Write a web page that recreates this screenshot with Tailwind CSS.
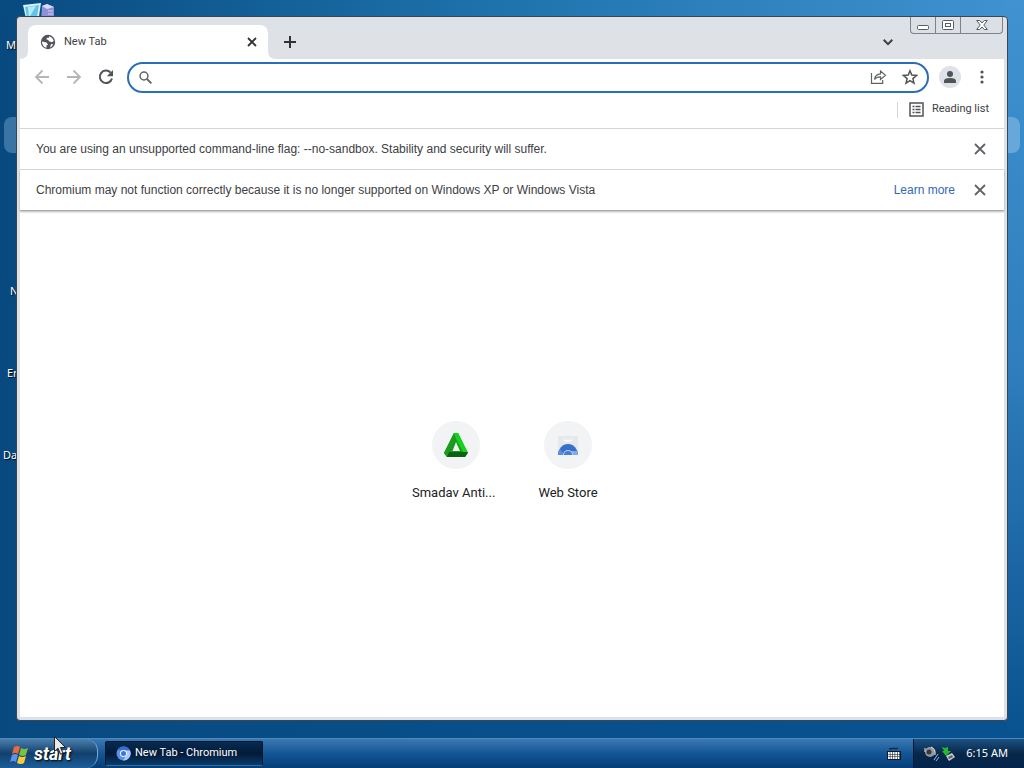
<!DOCTYPE html>
<html lang="en">

<head>
    <meta charset="UTF-8">
    <meta name="viewport" content="width=device-width, initial-scale=1.0">
    <title>New Tab - Chromium</title>
    <script src="https://cdn.jsdelivr.net/npm/@tailwindcss/browser@4"></script>
</head>

<body class="h-screen overflow-hidden font-['Liberation_Sans',sans-serif] text-xs text-[#3c4043]">

<div class="relative flex h-full flex-col justify-end bg-linear-to-r from-[#084a80] via-[#07508a] to-[#085290]">

    <!-- wallpaper glow -->
    <div class="absolute inset-x-0 top-0 h-[17px] bg-linear-to-r from-[#084a80] via-[#1f74ae] to-[#4093d0]"></div>
    <div class="absolute right-0 top-0 bottom-[30px] w-[18px] bg-linear-to-b from-[#4093d0] via-[#2f7dbc] to-[#085290]"></div>
    <div class="absolute left-1 top-[117px] h-9 w-8 rounded-lg bg-[#3a74a4]"></div>
    <div class="absolute right-1 top-[117px] h-9 w-8 rounded-lg bg-[#65a8d9]"></div>

    <!-- desktop icons -->
    <svg class="absolute left-[22px] top-[3px]" width="34" height="20" viewBox="0 0 34 20">
        <path d="M1 2 19 0l-3 20H5z" fill="#d8f3fb"/>
        <path d="M3 4 17 2l-3 18H6z" fill="#62c4e8"/>
        <path d="m6 4 8-1-7 12z" fill="#b5eafa"/>
        <path d="m20 3 5-2 7 3v16H19z" fill="#8f91d8"/>
        <path d="m20 3 5-2 7 3-7 2z" fill="#d9dcf7"/>
        <path d="M26 8h5M26 11h5" stroke="#d6cdf4"/>
    </svg>
    <div class="font-['Noto_Sans',sans-serif] text-[11px] leading-4 text-white [text-shadow:1px_1px_1px_#000]">
        <span class="absolute left-1.5 top-[37px]">My</span>
        <span class="absolute left-2.5 top-[283px]">N</span>
        <span class="absolute left-[7px] top-[365px]">Er</span>
        <span class="absolute left-[3px] top-[447px]">Da</span>
    </div>

    <!-- browser window -->
    <main class="absolute left-4 right-4 top-4 bottom-[47px] flex flex-col rounded-[4px] border border-[#3b4652] bg-[#dee1e6] px-[3px] pb-[3px]">

        <div class="flex h-[42px] items-end pl-2">
            <div class="relative flex h-[34px] w-60 items-center rounded-t-lg bg-white pl-3">
                <svg width="16" height="16" viewBox="0 0 16 16">
                    <circle cx="8" cy="8" r="7.2" fill="#505357"/>
                    <path d="M2 7.500 6.500 8.500 8 10.500 6.500 11.500v2.300C3.800 13.300 2 10.600 2 7.500zM9 2.200c2.500.5 4.300 2.500 4.800 4.900L12 8.200 9.300 7.500 8.200 6 6.300 5.300 7 3.800h2zM11 10l2.200.2c-.7 1.600-1.800 2.700-3.200 3.300z" fill="#fff"/>
                </svg>
                <span class="ml-2 grow font-[Roboto,sans-serif] text-[11px]">New Tab</span>
                <button class="mr-2 grid size-4 place-items-center" aria-label="Close tab">
                    <svg width="10" height="10" viewBox="0 0 10 10" stroke="#303336" stroke-width="1.8"><path d="m1 1 8 8M9 1 1 9"/></svg>
                </button>
                <svg class="absolute -left-2 bottom-0" width="8" height="8" viewBox="0 0 8 8" fill="#fff"><path d="M8 0v8H0q8 0 8-8"/></svg>
                <svg class="absolute -right-2 bottom-0" width="8" height="8" viewBox="0 0 8 8" fill="#fff"><path d="M0 0v8h8Q0 8 0 0"/></svg>
            </div>
            <button class="ml-2 grid h-[34px] w-7 place-items-center" aria-label="New tab">
                <svg width="12" height="12" viewBox="0 0 12 12" stroke="#303336" stroke-width="2"><path d="M6 0v12M0 6h12"/></svg>
            </button>
            <button class="ml-auto mr-[102px] grid h-[34px] w-7 place-items-center" aria-label="Search tabs">
                <svg width="10" height="7" viewBox="0 0 10 7" fill="none" stroke="#3c4043" stroke-width="2"><path d="m.7.8 4.300 4.300L9.300.8"/></svg>
            </button>
            <!-- caption buttons -->
            <div class="absolute right-1 top-0 flex h-[17px] w-[93px] divide-x divide-[#7e838b] rounded-b border border-t-0 border-[#7e838b] bg-[#dcdfe4]">
                <button class="grid w-[25px] place-items-center pt-1" aria-label="Minimize">
                    <svg width="12" height="5" viewBox="0 0 12 5"><rect x=".5" y=".5" width="11" height="4" rx="1" fill="#fff" stroke="#555c66"/></svg>
                </button>
                <button class="grid w-[25px] place-items-center" aria-label="Maximize">
                    <svg width="12" height="10" viewBox="0 0 12 10" fill="#fff" stroke="#555c66"><rect x=".5" y=".5" width="11" height="9" rx="1"/><rect x="3.500" y="3.500" width="5" height="3"/></svg>
                </button>
                <button class="grid grow place-items-center" aria-label="Close">
                    <svg width="12" height="10" viewBox="0 0 12 10"><path d="M.7.5h3L6 3 8.300.5h3L7.800 5l3.500 4.500h-3L6 7 3.700 9.500h-3L4.200 5z" fill="#fff" stroke="#555c66"/></svg>
                </button>
            </div>
        </div>

        <div class="flex h-9 items-center bg-white px-1.5">
            <button class="grid size-8 place-items-center" aria-label="Back">
                <svg width="16" height="16" viewBox="0 0 16 16" fill="none" stroke="#b4b6b9" stroke-width="1.800"><path d="M15 8H2M8.500 1.500 2 8l6.500 6.500"/></svg>
            </button>
            <button class="grid size-8 place-items-center" aria-label="Forward">
                <svg width="16" height="16" viewBox="0 0 16 16" fill="none" stroke="#b4b6b9" stroke-width="1.800"><path d="M1 8h13M7.500 1.500 14 8l-6.500 6.500"/></svg>
            </button>
            <button class="grid size-8 place-items-center" aria-label="Reload">
                <svg width="16" height="16" viewBox="0 0 16 16"><path d="M12.600 3.600A6.200 6.200 0 1 0 14 9.500" fill="none" stroke="#505357" stroke-width="2"/><path d="M15 1v6.200H8.800z" fill="#505357"/></svg>
            </button>
            <div class="ml-[5px] flex h-[31px] grow items-center rounded-full border-2 border-[#2a6ebb] bg-white pl-2.5 pr-[9px]">
                <svg width="13" height="13" viewBox="0 0 13 13" fill="none" stroke="#5f6368" stroke-width="1.500"><circle cx="5" cy="5" r="3.900"/><path d="m8 8 4.400 4.400" stroke-width="1.800"/></svg>
                <input type="text" aria-label="Address and search bar" class="mx-2 min-w-0 grow text-sm outline-none">
                <button class="mr-[15px] grid h-5 w-[18px] place-items-center" aria-label="Share">
                    <svg width="17" height="16" viewBox="0 0 17 16" fill="none" stroke="#5f6368" stroke-width="1.200"><path d="M1.500 4v10.400h11.200V11M4.500 10.500C5 7 7 5 10.500 4.800V2l5 4.300-5 4.200V7.800C7.800 7.700 6 8.500 4.500 10.500z"/></svg>
                </button>
                <button class="grid size-4 place-items-center" aria-label="Bookmark this tab">
                    <svg width="16" height="16" viewBox="0 0 16 16" fill="none" stroke="#505357" stroke-width="1.500"><path d="m8 1.800 1.800 4.300 4.700.4-3.600 3.100 1.100 4.600L8 11.700l-4 2.500 1.100-4.600-3.600-3.100 4.700-.4z"/></svg>
                </button>
            </div>
            <button class="ml-2.5 grid size-[22px] place-items-center rounded-full bg-[#dfe1e8]" aria-label="Profile">
                <svg width="12" height="12" viewBox="0 0 12 12" fill="#505357"><circle cx="6" cy="3" r="3"/><path d="M0 12V10q0-3 6-3t6 3v2z"/></svg>
            </button>
            <button class="ml-[5px] grid size-8 place-items-center" aria-label="Menu">
                <svg width="4" height="14" viewBox="0 0 4 14" fill="#505357"><circle cx="2" cy="2" r="1.600"/><circle cx="2" cy="7" r="1.600"/><circle cx="2" cy="12" r="1.600"/></svg>
            </button>
        </div>

        <div class="flex h-[33px] items-center justify-end bg-white pr-[15px] pb-1">
            <div class="mr-[11px] h-4 w-px bg-[#d3d5d8]"></div>
            <button class="flex items-center gap-2 font-[Roboto,sans-serif] text-[11px]">
                <svg width="15" height="15" viewBox="0 0 15 15" fill="none" stroke="#505357" stroke-width="1.500"><rect x="1" y="1" width="13" height="13"/><path d="M3.500 4.500h2M3.500 7.500h2M3.500 10.500h2M6.500 4.500h5M6.500 7.500h5M6.500 10.500h5"/></svg>
                Reading list
            </button>
        </div>

        <div class="flex h-[41px] items-center border-t border-[#d3d5d8] bg-white px-4">
            <span class="grow">You are using an unsupported command-line flag: --no-sandbox. Stability and security will suffer.</span>
            <button class="grid size-4 place-items-center" aria-label="Dismiss">
                <svg width="12" height="12" viewBox="0 0 12 12" stroke="#606367" stroke-width="1.800"><path d="m1 1 10 10M11 1 1 11"/></svg>
            </button>
        </div>
        <div class="relative flex h-[41px] items-center border-t border-[#d3d5d8] bg-white px-4 shadow-[0_1px_1px_#aaadb0,0_2px_2px_#b8babc]">
            <span class="grow">Chromium may not function correctly because it is no longer supported on Windows XP or Windows Vista</span>
            <a href="#" class="mr-[17px] text-[#3267b5]">Learn more</a>
            <button class="grid size-4 place-items-center" aria-label="Dismiss">
                <svg width="12" height="12" viewBox="0 0 12 12" stroke="#606367" stroke-width="1.800"><path d="m1 1 10 10M11 1 1 11"/></svg>
            </button>
        </div>

        <!-- new tab page -->
        <div class="flex min-h-0 grow items-center justify-center bg-white pb-1 font-[Roboto,sans-serif] text-[13px] leading-5 text-[#202124]">
            <a href="#" class="flex w-28 flex-col items-center gap-3.5">
                <span class="grid size-12 place-items-center rounded-full bg-[#f1f3f4]">
                    <svg width="26" height="26" viewBox="0 0 26 26">
                        <path d="M11 1h4l10 20-3 4H4l-3-4z" fill="#159a18"/>
                        <path d="M11 1 1 21l3 4 9-18z" fill="#1c9a22"/>
                        <path d="m11 1 2 6 7 13 5 1L15 1z" fill="#14d31c"/>
                        <path d="M6 20h19l-3 5H4z" fill="#08620e"/>
                        <path d="m13 10 4 9H9.500z" fill="#f1f3f4"/>
                    </svg>
                </span>
                <span class="w-[88px] whitespace-nowrap">Smadav Anti...</span>
            </a>
            <a href="#" class="flex w-28 flex-col items-center gap-3.5">
                <span class="grid size-12 place-items-center rounded-full bg-[#f1f3f4]">
                    <svg width="22" height="22" viewBox="0 0 22 22">
                        <path d="M1 2h20v19H1z" fill="#e6e8eb"/>
                        <path d="M7 6q4 2 8 0" fill="none" stroke="#f8f8f8" stroke-width="2"/>
                        <path d="M1 21a10 11 0 0 1 20 0z" fill="#376fcb"/>
                        <path d="M1 21a10 11 0 0 1 2-6l5 6z" fill="#598de0"/>
                        <path d="M11 17h9q1 2 1 4h-7z" fill="#82aaf0"/>
                        <path d="M6 21a5 5 0 0 1 10 0z" fill="#b9d0f6"/>
                        <path d="M7 21a4 4 0 0 1 8 0z" fill="#467cdc"/>
                    </svg>
                </span>
                <span>Web Store</span>
            </a>
        </div>
    </main>

    <!-- taskbar -->
    <footer class="relative flex h-[30px] items-center border-t border-[#4c8ac0] bg-linear-to-b from-[#3a79b2] via-[#135696] to-[#063d76] font-['Noto_Sans',sans-serif] text-[11px] text-white">
        <button class="flex h-full w-[98px] items-center rounded-r-xl border-r border-[#7aa9ce] bg-linear-to-b from-[#4c80ad] via-[#12406d] to-[#1c5e99] pl-2.5">
            <svg width="20" height="20" viewBox="0 0 20 20">
                <path d="M4 3q3-2 6 0L8 10q-3-2-6 0z" fill="#e9693c"/>
                <path d="M11 4q3 2 7 0l-2 7q-3 2-7 0z" fill="#79c043"/>
                <path d="M2 11q3-2 6 0l-2 7q-3-2-6 0z" fill="#5c93e6"/>
                <path d="M9 12q3 2 7 0l-2 7q-3 2-7 0z" fill="#f6cc3c"/>
            </svg>
            <span class="ml-1 font-[Roboto,sans-serif] text-lg font-bold italic leading-5 [text-shadow:1px_1px_2px_#000]">start</span>
        </button>
        <button class="ml-[7px] flex h-[25px] w-[158px] items-center gap-1 rounded-xs border border-[#04172f] border-b-[#2e6da3] bg-linear-to-b from-[#082b50] via-[#031a39] to-[#0a3c6b] pl-2.5 font-[Roboto,sans-serif]">
            <svg width="15" height="15" viewBox="0 0 15 15">
                <circle cx="7.500" cy="7.500" r="7" fill="#5d8fe8"/>
                <path d="M1.500 4A7 7 0 0 1 14 4.500H7.500z" fill="#3970cf"/>
                <path d="M14 4.500A7 7 0 0 1 7 14.500l4-6.500-2-3.500z" fill="#a9c9fb"/>
                <circle cx="7.500" cy="7.500" r="3.600" fill="#eaf2ff"/>
                <circle cx="7.500" cy="7.500" r="2.500" fill="#3c75d8"/>
            </svg>
            New Tab - Chromium
        </button>
        <svg class="ml-auto mr-3" width="14" height="13" viewBox="0 0 14 13">
            <path d="M3 3V1l2 1 2-1 2 1 2-1" fill="none" stroke="#0a1a2a"/>
            <path d="M0 4h14v9H0z" fill="#0c1c2c"/>
            <path d="M1 6h12M1 8.500h12M1 11h12" stroke="#fff" stroke-width="2" stroke-dasharray="1.800 .6"/>
        </svg>
        <div class="flex h-full w-[111px] items-center border-l border-[#041c38] bg-linear-to-b from-[#1d5284] via-[#072849] to-[#04234a] pl-2.5">
            <svg width="34" height="16" viewBox="0 0 34 16">
                <circle cx="6" cy="6" r="5" fill="#94999d"/>
                <circle cx="5" cy="6" r="2.500" fill="#35393c"/>
                <path d="M1 2v4M7 1q5 2 4 8" fill="none" stroke="#e4e7ea"/>
                <path d="m10 14 4-6M12 15l3-4" stroke="#92baf0"/>
                <path d="m18 1 3 1 3-1v4h3l-5 5-4-5h2z" fill="#28b732"/>
                <path d="m22 10 6-3 3 4-6 4z" fill="#c9cdd1"/>
                <path d="m24 11 4-2 1 2-4 2z" fill="#596167"/>
            </svg>
            <span class="ml-auto mr-4">6:15 AM</span>
        </div>
    </footer>

    <!-- mouse pointer -->
    <svg class="absolute left-[54px] bottom-3" width="14" height="20" viewBox="0 0 14 20">
        <path d="M.5.5v15l3.500-3.300 2.500 6 2.500-1-2.500-5.700h5z" fill="#e8e8e8" stroke="#222"/>
    </svg>
</div>

</body>
</html>
